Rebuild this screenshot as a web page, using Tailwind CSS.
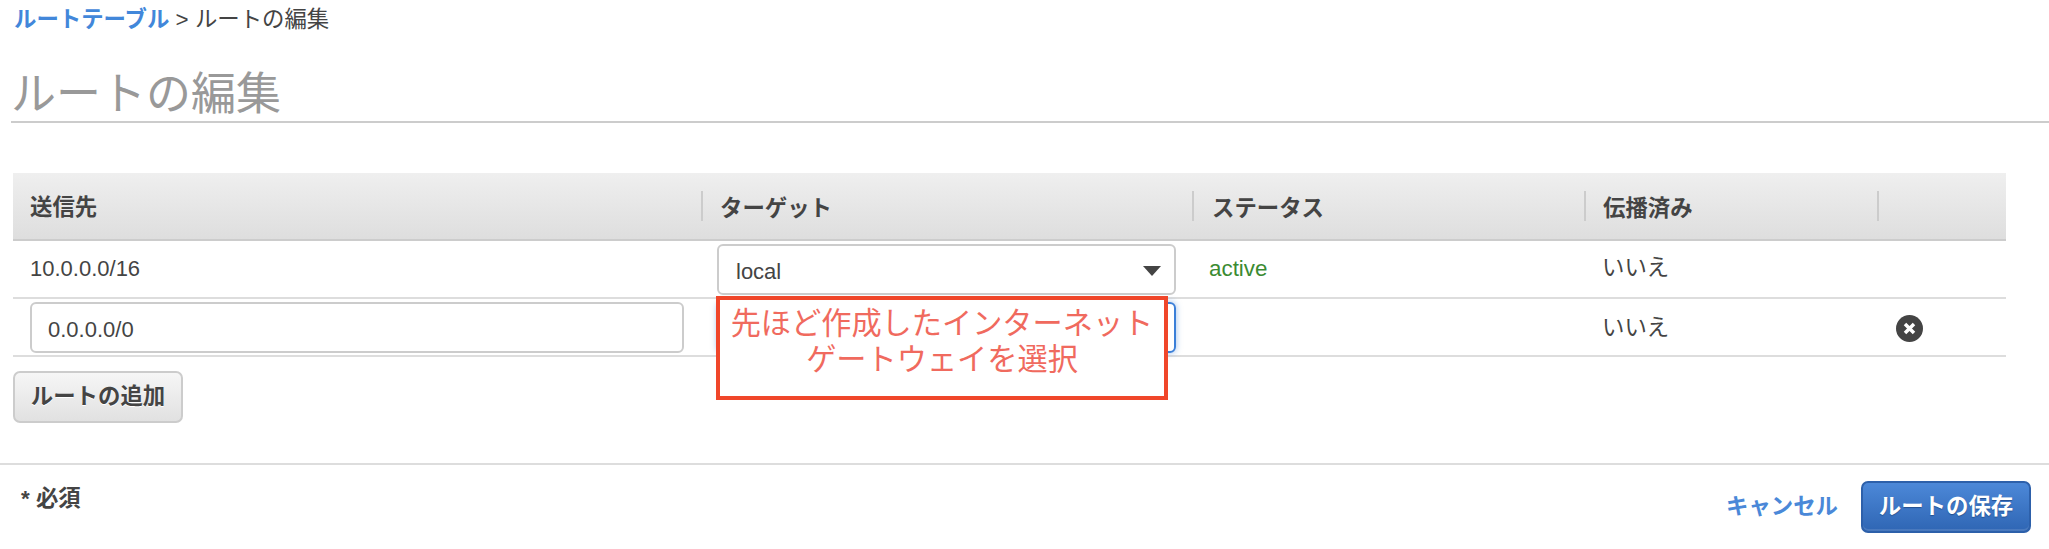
<!DOCTYPE html>
<html lang="ja">
<head>
  <meta charset="UTF-8">
  <title>ルートの編集</title>
  <script src="https://cdn.jsdelivr.net/npm/@tailwindcss/browser@4"></script>
</head>
<body class="bg-white h-[549px] overflow-hidden font-['Liberation_Sans','Noto_Sans_CJK_JP',sans-serif] text-[22.4px] text-[#444]">
  <!-- breadcrumb -->
  <div class="h-10 pl-[14px] leading-10">
    <a href="#" class="text-[#4287da] font-bold">ルートテーブル</a> &gt; ルートの編集
  </div>

  <!-- title -->
  <div class="ml-[11px] h-[83px] border-b-2 border-[#ccc]">
    <h1 class="text-[45px] leading-[110px] text-[#999]">ルートの編集</h1>
  </div>

  <!-- routes table -->
  <div class="relative ml-[13px] w-[1993px] mt-[50px]">
    <div class="grid grid-cols-[688px_491px_392px_293px_129px] h-[68px] items-center bg-gradient-to-b from-[#efefef] to-[#dedede] border-b-2 border-[#ccc] font-bold">
      <div class="pl-[17px] pt-[3px]">送信先</div>
      <div class="pl-[17px] h-[30px] pt-[3px] leading-[30px] border-l-2 border-[#ccc]">ターゲット</div>
      <div class="pl-[18px] h-[30px] pt-[3px] leading-[30px] border-l-2 border-[#ccc]">ステータス</div>
      <div class="pl-[17px] h-[30px] pt-[3px] leading-[30px] border-l-2 border-[#ccc]">伝播済み</div>
      <div class="h-[30px] border-l-2 border-[#ccc]"></div>
    </div>

    <div class="grid grid-cols-[688px_491px_392px_293px_129px] h-[58px] items-center border-b-2 border-[#ddd]">
      <div class="pl-[17px] -mt-[2px] text-[22px]">10.0.0.0/16</div>
      <div class="relative pl-[16px] pr-[16px]">
        <select class="appearance-none w-full h-[51px] pl-[17px] pt-[5px] border-2 border-[#ccc] rounded-[6px] bg-white text-[22px]">
          <option>local</option>
        </select>
        <svg class="absolute left-[442px] top-[22px] w-[18px] h-[10px]" viewBox="0 0 18 10"><path d="M0 0h18L9 10z" fill="#444"/></svg>
      </div>
      <div class="pl-[17px] text-[#3b8b32]">active</div>
      <div class="pl-[18px] -mt-[2px]">いいえ</div>
      <div></div>
    </div>

    <div class="grid grid-cols-[688px_491px_392px_293px_129px] h-[58px] items-center border-b-2 border-[#ddd]">
      <div class="pl-[17px] pr-[17px]">
        <input type="text" value="0.0.0.0/0" class="w-full h-[51px] pl-[16px] pt-[5px] border-2 border-[#ccc] rounded-[6px] bg-white text-[22px]">
      </div>
      <div class="pl-[16px] pr-[16px]">
        <div class="h-[51px] border-2 border-[#3b7fd8] rounded-[6px] shadow-[0_0_6px_rgba(59,127,216,0.5)]"></div>
      </div>
      <div></div>
      <div class="pl-[18px] mt-[1px]">いいえ</div>
      <div class="pl-[19px] pt-[3px]">
        <svg class="w-[27px] h-[27px]" viewBox="0 0 27 27">
          <circle cx="13.5" cy="13.5" r="13.5" fill="#444"/>
          <path d="M9 9l9 9M18 9l-9 9" stroke="#fff" stroke-width="3.5"/>
        </svg>
      </div>
    </div>

    <!-- annotation over the second row -->
    <div class="absolute left-[703px] top-[123px] w-[452px] h-[104px] border-4 border-[#f0462a] bg-white pt-[6px] text-center text-[30.2px] leading-[36px] text-[#f06a5e]">
      先ほど作成したインターネット<br>ゲートウェイを選択
    </div>

    <button class="mt-[14px] w-[170px] h-[52px] border-2 border-[#ccc] rounded-[7px] bg-gradient-to-b from-[#f6f6f6] to-[#e1e1e1] font-bold [text-shadow:0_1px_0_#fff]">ルートの追加</button>
  </div>

  <!-- footer -->
  <div class="mt-[40px] h-[85px] border-t-2 border-[#ddd] flex items-start justify-between pl-[21px] pr-[18px]">
    <div class="mt-[17px] font-bold">* 必須</div>
    <div class="flex items-center gap-[23px] mt-[16px]">
      <a href="#" class="font-bold text-[#4a88d8]">キャンセル</a>
      <button class="w-[170px] h-[52px] border-2 border-[#2d60aa] rounded-[7px] bg-gradient-to-b from-[#4c88d8] to-[#2f66b4] shadow-[inset_0_-2px_0_rgba(255,255,255,0.12)] font-bold text-white [text-shadow:0_1px_1px_#24508f]">ルートの保存</button>
    </div>
  </div>
</body>
</html>
